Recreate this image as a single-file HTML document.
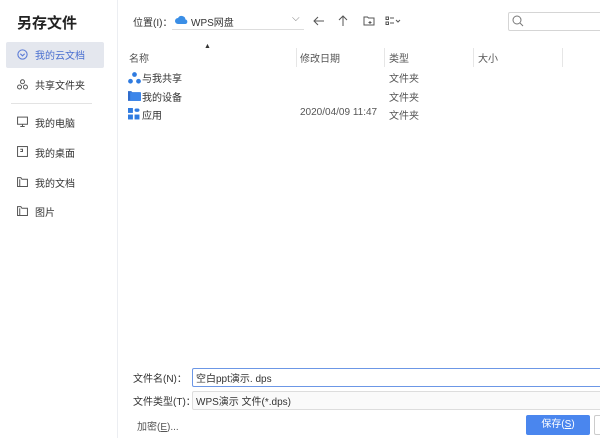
<!DOCTYPE html>
<html><head><meta charset="utf-8"><style>
*{margin:0;padding:0;box-sizing:border-box}
body{width:600px;height:438px;background:#fff;font-family:"Liberation Sans","Noto Sans CJK SC",sans-serif;font-size:10px;color:#333;position:relative;overflow:hidden}
.a{position:absolute;white-space:nowrap}
.side{position:absolute;left:0;top:0;width:118px;height:438px;border-right:1px solid #eceef2}
.ic{position:absolute;width:11px;height:11px}
.hd{color:#555}
.sep{position:absolute;top:48px;width:1px;height:19px;background:#e6e6e6}
</style></head><body>
<div class="side"></div>
<div class="a" style="left:17px;top:12px;font-size:15px;font-weight:bold;color:#222">另存文件</div>
<div class="a" style="left:6px;top:42px;width:98px;height:26px;background:#e4e7ee;border-radius:2px"></div>
<svg class="ic" style="left:17px;top:49px" viewBox="0 0 10 10"><circle cx="5" cy="5" r="4.2" fill="none" stroke="#5b7bd6" stroke-width="1"/><path d="M3 4.3L5 6.2 7 4.3" fill="none" stroke="#5b7bd6" stroke-width="1"/></svg>
<div class="a" style="left:35px;top:47px;color:#4a6fd0">我的云文档</div>
<svg class="ic" style="left:17px;top:79px" viewBox="0 0 10 10" fill="none" stroke="#555" stroke-width=".9"><circle cx="5" cy="2.5" r="1.8"/><circle cx="2.3" cy="7.3" r="1.8"/><circle cx="7.7" cy="7.3" r="1.8"/></svg>
<div class="a" style="left:35px;top:77px">共享文件夹</div>
<div class="a" style="left:11px;top:103px;width:81px;height:1px;background:#e3e3e3"></div>
<svg class="ic" style="left:17px;top:116px" viewBox="0 0 10 10" fill="none" stroke="#555" stroke-width=".9"><rect x=".5" y="1" width="9" height="6.5"/><path d="M3 9.5h4M5 7.5v2"/></svg>
<div class="a" style="left:35px;top:115px">我的电脑</div>
<svg class="ic" style="left:17px;top:146px" viewBox="0 0 10 10" fill="none" stroke="#555" stroke-width=".9"><rect x=".5" y=".5" width="9" height="9"/><path d="M3 3h2v2H3"/></svg>
<div class="a" style="left:35px;top:145px">我的桌面</div>
<svg class="ic" style="left:17px;top:176px" viewBox="0 0 10 10" fill="none" stroke="#555" stroke-width=".9"><path d="M.5 1.5h3l1 1.5h5v6.5h-9z"/><path d="M2.5 3v6.5"/></svg>
<div class="a" style="left:35px;top:175px">我的文档</div>
<svg class="ic" style="left:17px;top:205px" viewBox="0 0 10 10" fill="none" stroke="#555" stroke-width=".9"><path d="M.5 1.5h3l1 1.5h5v6.5h-9z"/><path d="M2.5 3v6.5"/></svg>
<div class="a" style="left:35px;top:204px">图片</div>

<div class="a" style="left:133px;top:14px">位置(I)：</div>
<svg class="a" style="left:175px;top:15px" width="13" height="9" viewBox="0 0 13 9"><path d="M3 9a3 3 0 0 1 0-6 4 4 0 0 1 7.5 1.5A2.3 2.3 0 0 1 10.5 9z" fill="#3a8ee6"/></svg>
<div class="a" style="left:191px;top:14px">WPS网盘</div>
<div class="a" style="left:292px;top:13px;color:#777">⌵</div>
<div class="a" style="left:172px;top:29px;width:132px;height:1px;background:#ddd"></div>
<svg class="a" style="left:312px;top:15px" width="110" height="12" viewBox="0 0 110 12" fill="none" stroke="#555" stroke-width="1"><path d="M2 6h10M6 2L2 6l4 4"/><path d="M31 11V1M27 5l4-4 4 4"/><path d="M52 2h3.5l1 1h5.5v7h-10z M58 6v3M56.5 7.5h3"/><rect x="74" y="2" width="2.5" height="2.5"/><rect x="74" y="7" width="2.5" height="2.5"/><path d="M78 3h4M78 8h4M84 5l2 2 2-2"/></svg>
<div class="a" style="left:508px;top:12px;width:100px;height:19px;border:1px solid #d5d5d5;border-radius:2px"></div>
<svg class="a" style="left:512px;top:15px" width="12" height="12" viewBox="0 0 12 12" fill="none" stroke="#777" stroke-width="1"><circle cx="5" cy="5" r="4"/><path d="M8 8l3 3"/></svg>

<div class="a" style="left:204px;top:43px;font-size:7px;color:#333">▲</div>
<div class="a hd" style="left:129px;top:50px">名称</div>
<div class="sep" style="left:296px"></div>
<div class="a hd" style="left:300px;top:50px">修改日期</div>
<div class="sep" style="left:384px"></div>
<div class="a hd" style="left:389px;top:50px">类型</div>
<div class="sep" style="left:473px"></div>
<div class="a hd" style="left:478px;top:50px">大小</div>
<div class="sep" style="left:562px"></div>

<svg class="a" style="left:128px;top:72px" width="13" height="12" viewBox="0 0 12 11" fill="#2f7be0"><circle cx="6" cy="2.3" r="2.2"/><circle cx="2.3" cy="8.5" r="2.2"/><circle cx="9.7" cy="8.5" r="2.2"/></svg>
<div class="a" style="left:142px;top:70px">与我共享</div>
<div class="a" style="left:389px;top:70px;color:#555">文件夹</div>
<svg class="a" style="left:128px;top:90px" width="13" height="11" viewBox="0 0 12 10"><path d="M0 1h3l1 1h7v8H0z" fill="#2f6ccc"/><rect x="2" y="2" width="10" height="8" fill="#3d86ea"/></svg>
<div class="a" style="left:142px;top:89px">我的设备</div>
<div class="a" style="left:389px;top:89px;color:#555">文件夹</div>
<svg class="a" style="left:128px;top:108px" width="12" height="12" viewBox="0 0 11 11" fill="#2f7be0"><rect x="0" y="0" width="4.5" height="4.5"/><rect x="6" y="0.5" width="4.5" height="3" rx="1.5"/><rect x="0" y="6" width="4.5" height="4.5"/><rect x="6" y="6" width="4.5" height="4.5"/></svg>
<div class="a" style="left:142px;top:107px">应用</div>
<div class="a" style="left:300px;top:107px;color:#555">2020/04/09 11:47</div>
<div class="a" style="left:389px;top:107px;color:#555">文件夹</div>

<div class="a" style="left:133px;top:370px">文件名(N)：</div>
<div class="a" style="left:192px;top:368px;width:420px;height:19px;border:1px solid #6c97e6;border-radius:2px"></div>
<div class="a" style="left:196px;top:370px">空白ppt演示. dps</div>
<div class="a" style="left:133px;top:393px">文件类型(T)：</div>
<div class="a" style="left:192px;top:391px;width:420px;height:19px;border:1px solid #ddd;background:#fafafa;border-radius:2px"></div>
<div class="a" style="left:196px;top:393px">WPS演示 文件(*.dps)</div>
<div class="a" style="left:137px;top:418px;color:#555">加密(<u>E</u>)...</div>
<div class="a" style="left:526px;top:415px;width:64px;height:20px;background:#4a86ee;border-radius:2px;color:#fff;text-align:center;line-height:20px">保存(<u>S</u>)</div>
<div class="a" style="left:594px;top:415px;width:20px;height:20px;border:1px solid #ccc;border-radius:2px"></div>
</body></html>
